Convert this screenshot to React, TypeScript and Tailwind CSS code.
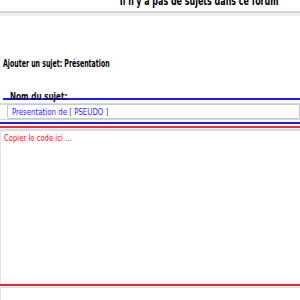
import React from 'react';

const cond = { fontFamily: '"DejaVu Sans Condensed", "DejaVu Sans", sans-serif' };

const App: React.FC = () => {
  return (
    <div className="w-[300px] h-[300px] overflow-hidden bg-white" style={cond}>
      {/* header, cut off at the top */}
      <div className="h-[11px] flex justify-end pr-[22px]">
        <p className="-mt-[7px] text-[13px] leading-[15px] font-bold text-black whitespace-nowrap origin-right scale-x-[0.68]">
          Il n'y a pas de sujets dans ce forum
        </p>
      </div>
      <div className="h-[2px] bg-[#d6d6d6]" />
      <div className="h-[3px] bg-[#eeeeee]" />

      <div className="h-[53px] pt-[41px] pl-[3px]">
        <h2 className="text-[10.5px] leading-[12px] font-bold text-black whitespace-nowrap origin-left scale-x-[0.66]">
          Ajouter un sujet: Présentation
        </h2>
      </div>

      <div className="mt-[20px] ml-[3px] h-[11px] border-b-2 border-[#1a1aff] pl-[7px] flex items-end">
        <span className="text-[10.5px] leading-[11px] -mb-[4px] font-bold text-[#111] whitespace-nowrap origin-left scale-x-[0.77] inline-block">
          Nom du sujet:
        </span>
      </div>

      <div className="mt-[3px] border-t-2 border-[#d9d9d9]">
        <div className="ml-[7px] -mt-[1px] h-[15px] border border-[#c8c8c8] rounded-[2px] flex items-center pl-[4px]">
          <span className="text-[9.5px] leading-[12px] text-[#1f1fff] whitespace-nowrap origin-left scale-x-[0.82] inline-block">
            Presentation de [ PSEUDO ]
          </span>
        </div>
      </div>
      <div className="h-[1px] bg-[#d4d4d4]" />
      <div className="mt-[2px] h-[2px] bg-[#1a1aff]" />
      <div className="mt-[2px] h-[2px] bg-[#ff2a2a]" />
      <div className="mt-[1px] h-[2px] bg-[#dcdcdc]" />

      <div className="border-l border-[#e4e4e4] h-[153px] pl-[3px] pt-[1px] text-[9.5px] leading-[12px]">
        <span className="text-[#ff1010] whitespace-nowrap origin-left scale-x-[0.8] inline-block">
          Copier le code ici ...
        </span>
      </div>
      <div className="h-[2px] bg-[#ff2020]" />
      <div className="mt-[1px] h-[1px] bg-[#dddddd]" />
      <div className="border-l border-[#e4e4e4] h-[20px]" />
    </div>
  );
};

export default App;
